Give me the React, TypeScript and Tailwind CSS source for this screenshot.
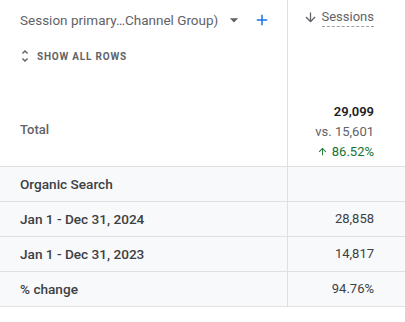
import React from "react";

const rows = [
  { label: "Organic Search", value: "" },
  { label: "Jan 1 - Dec 31, 2024", value: "28,858" },
  { label: "Jan 1 - Dec 31, 2023", value: "14,817" },
  { label: "% change", value: "94.76%" },
];

export default function App() {
  return (
    <div className="w-[405px] h-[322px] bg-white overflow-hidden font-['Roboto',sans-serif]">
      {/* Header + total */}
      <div className="grid grid-cols-[288px_1fr] h-[166px]">
        <div className="border-r border-[#e0e0e0] pl-[20px] flex flex-col">
          <div className="mt-[10px] h-[20px] flex items-center text-[13.5px] text-[#5f6368]">
            <span>Session primary…Channel Group)</span>
            <svg viewBox="0 0 24 24" className="w-[20px] h-[20px] ml-[6px] fill-[#5f6368]">
              <path d="M7 10l5 5 5-5z" />
            </svg>
            <svg viewBox="0 0 24 24" className="w-[18px] h-[18px] ml-[9px] fill-[#1a73e8]">
              <path d="M19 13h-6v6h-2v-6H5v-2h6V5h2v6h6v2z" />
            </svg>
          </div>
          <div className="mt-[18px] h-[16px] flex items-center gap-[4px] text-[10px] font-bold tracking-[0.08em] text-[#5f6368] -ml-[3px]">
            <svg viewBox="0 0 24 24" className="w-[16px] h-[16px] fill-[#5f6368]">
              <path d="M12 5.83L15.17 9l1.41-1.41L12 3 7.41 7.59 8.83 9 12 5.83zm0 12.34L8.83 15l-1.41 1.41L12 21l4.59-4.59L15.17 15 12 18.17z" />
            </svg>
            SHOW ALL ROWS
          </div>
          <div className="mt-[56px] h-[20px] flex items-center text-[13px] font-medium text-[#5f6368]">
            Total
          </div>
        </div>
        <div className="pr-[31px] flex flex-col items-end">
          <div className="mt-[7px] h-[20px] flex items-center gap-[4px] text-[13px] text-[#5f6368]">
            <svg viewBox="0 0 24 24" className="w-[15px] h-[15px] fill-[#5f6368]">
              <path d="M20 12l-1.41-1.41L13 16.17V4h-2v12.17l-5.58-5.59L4 12l8 8 8-8z" />
            </svg>
            <span className="border-b border-dashed border-[#9aa0a6] leading-[18px]">Sessions</span>
          </div>
          <div className="mt-[75px] h-[20px] flex items-center text-[13px] font-semibold text-[#202124]">
            29,099
          </div>
          <div className="h-[20px] flex items-center text-[13px] text-[#5f6368]">vs. 15,601</div>
          <div className="h-[19px] flex items-center gap-[4px] text-[13px] text-[#137333]">
            <svg viewBox="0 0 24 24" className="w-[11px] h-[11px] fill-[#137333]">
              <path d="M4 12l1.41 1.41L11 7.83V20h2V7.83l5.58 5.59L20 12l-8-8-8 8z" />
            </svg>
            86.52%
          </div>
        </div>
      </div>

      {/* Breakdown rows */}
      <div className="bg-[#f8f9fa] border-b border-[#e0e0e0]">
        {rows.map((r) => (
          <div key={r.label} className="grid grid-cols-[288px_1fr] h-[35px] border-t border-[#e0e0e0]">
            <div className="border-r border-[#e0e0e0] pl-[20px] flex items-center text-[13.6px] font-medium text-[#3c4043]">
              {r.label}
            </div>
            <div className="pr-[31px] flex items-center justify-end text-[13px] text-[#3c4043]">
              {r.value}
            </div>
          </div>
        ))}
      </div>
    </div>
  );
}
